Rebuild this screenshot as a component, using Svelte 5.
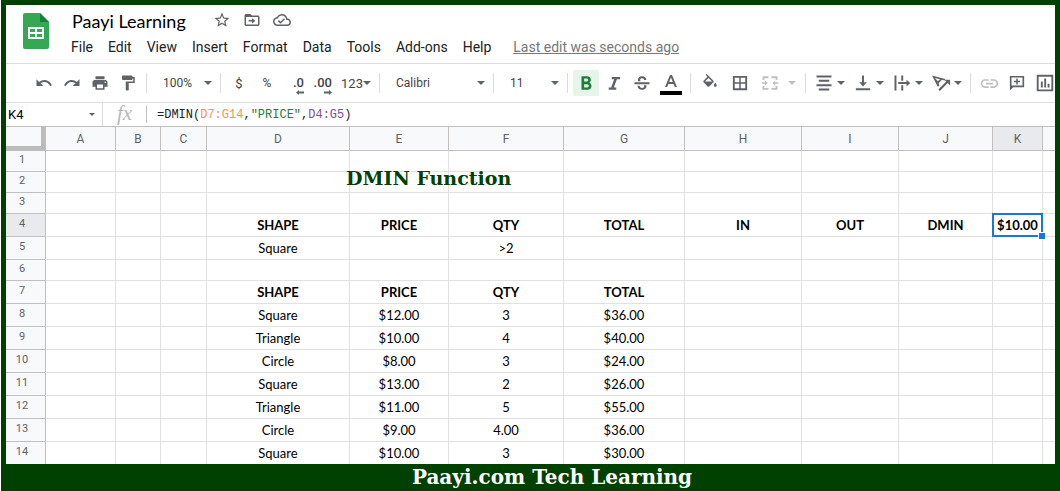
<script lang="ts">
  interface Column {
    name: string;
    width: number;
  }

  interface Row {
    height: number;
    bold?: boolean;
    cells: Record<string, string>;
  }

  const menus = ["File", "Edit", "View", "Insert", "Format", "Data", "Tools", "Add-ons", "Help"];

  const columns: Column[] = [
    { name: "A", width: 70 },
    { name: "B", width: 45 },
    { name: "C", width: 46 },
    { name: "D", width: 143 },
    { name: "E", width: 99 },
    { name: "F", width: 115 },
    { name: "G", width: 121 },
    { name: "H", width: 117 },
    { name: "I", width: 97 },
    { name: "J", width: 94 },
    { name: "K", width: 50 },
  ];

  const rows: Row[] = [
    { height: 21, cells: {} },
    { height: 21, cells: {} },
    { height: 21, cells: {} },
    {
      height: 23,
      bold: true,
      cells: { D: "SHAPE", E: "PRICE", F: "QTY", G: "TOTAL", H: "IN", I: "OUT", J: "DMIN", K: "$10.00" },
    },
    { height: 23, cells: { D: "Square", F: ">2" } },
    { height: 21, cells: {} },
    { height: 23, bold: true, cells: { D: "SHAPE", E: "PRICE", F: "QTY", G: "TOTAL" } },
    { height: 23, cells: { D: "Square", E: "$12.00", F: "3", G: "$36.00" } },
    { height: 23, cells: { D: "Triangle", E: "$10.00", F: "4", G: "$40.00" } },
    { height: 23, cells: { D: "Circle", E: "$8.00", F: "3", G: "$24.00" } },
    { height: 23, cells: { D: "Square", E: "$13.00", F: "2", G: "$26.00" } },
    { height: 23, cells: { D: "Triangle", E: "$11.00", F: "5", G: "$55.00" } },
    { height: 23, cells: { D: "Circle", E: "$9.00", F: "4.00", G: "$36.00" } },
    { height: 22, cells: { D: "Square", E: "$10.00", F: "3", G: "$30.00" } },
  ];

  let activeCol = $state("K");
  let activeRow = $state(4);
  let bold = $state(true);

  function select(col: string, row: number) {
    activeCol = col;
    activeRow = row;
  }
</script>

{#snippet caret()}
  <svg class="caret" viewBox="0 0 8 4" aria-hidden="true"><path d="M0 0h8L4 4z" /></svg>
{/snippet}

{#snippet icon(d: string)}
  <svg class="icon" viewBox="0 0 24 24" aria-hidden="true"><path {d} /></svg>
{/snippet}

<div class="frame">
  <header class="header">
    <svg class="logo" viewBox="0 0 26 36" aria-hidden="true">
      <path fill="#34a853" d="M2 0h15l9 9v25a2 2 0 0 1-2 2H2a2 2 0 0 1-2-2V2a2 2 0 0 1 2-2z" />
      <path fill="#188038" d="M17 0l9 9h-9z" />
      <path fill="#fff" d="M5 14h16v12H5zM7 16v3h5v-3zM14 16v3h5v-3zM7 21v3h5v-3zM14 21v3h5v-3z" fill-rule="evenodd" />
    </svg>
    <div class="header-main">
      <div class="title-row">
        <h1 class="title">Paayi Learning</h1>
        <div class="title-actions">
          <button aria-label="Star">
            {@render icon("M22 9.24l-7.19-.62L12 2 9.19 8.63 2 9.24l5.46 4.73L5.82 21 12 17.27 18.18 21l-1.63-7.03L22 9.24zM12 15.4l-3.76 2.27 1-4.28-3.32-2.88 4.38-.38L12 6.1l1.71 4.04 4.38.38-3.32 2.88 1 4.28L12 15.4z")}
          </button>
          <button aria-label="Move">
            {@render icon("M20 6h-8l-2-2H4c-1.1 0-2 .9-2 2v12c0 1.1.9 2 2 2h16c1.1 0 2-.9 2-2V8c0-1.1-.9-2-2-2zm0 12H4V8h16v10zM12 12H7.500v2H12v2.500l4.500-3.500L12 9.500z")}
          </button>
          <button aria-label="Saved to Drive">
            {@render icon("M19.350 10.040C18.670 6.590 15.640 4 12 4 9.110 4 6.600 5.640 5.350 8.040 2.340 8.360 0 10.910 0 14c0 3.310 2.690 6 6 6h13c2.760 0 5-2.240 5-5 0-2.640-2.050-4.780-4.650-4.960zM19 18H6c-2.210 0-4-1.790-4-4 0-2.050 1.530-3.760 3.560-3.970l1.070-.110.500-.950C8.080 7.140 9.940 6 12 6c2.620 0 4.880 1.860 5.390 4.430l.300 1.500 1.530.110c1.560.100 2.780 1.410 2.780 2.960 0 1.650-1.350 3-3 3zm-9-3.820l-2.090-2.090L6.500 13.500 10 17l6.010-6.010-1.410-1.410z")}
          </button>
        </div>
      </div>
      <nav class="menus">
        {#each menus as menu (menu)}
          <button>{menu}</button>
        {/each}
        <a href="#history" class="last-edit">Last edit was seconds ago</a>
      </nav>
    </div>
  </header>

  <div class="toolbar" role="toolbar" aria-label="Formatting">
    <button class="tool" aria-label="Undo">
      {@render icon("M12.5 8c-2.65 0-5.05.99-6.9 2.6L2 7v9h9l-3.62-3.62c1.39-1.16 3.16-1.88 5.12-1.88 3.54 0 6.55 2.31 7.6 5.5l2.37-.78C21.08 11.03 17.15 8 12.5 8z")}
    </button>
    <button class="tool" aria-label="Redo">
      {@render icon("M18.4 10.6C16.55 8.99 14.15 8 11.5 8c-4.65 0-8.58 3.03-9.96 7.22L3.9 16c1.05-3.19 4.05-5.5 7.6-5.5 1.95 0 3.73.72 5.12 1.88L13 16h9V7l-3.6 3.6z")}
    </button>
    <button class="tool" aria-label="Print">
      {@render icon("M19 8H5c-1.660 0-3 1.340-3 3v6h4v4h12v-4h4v-6c0-1.660-1.340-3-3-3zm-3 11H8v-5h8v5zm3-7c-.550 0-1-.450-1-1s.450-1 1-1 1 .450 1 1-.450 1-1 1zm-1-9H6v4h12V3z")}
    </button>
    <button class="tool" aria-label="Paint format">
      {@render icon("M18 4V3c0-.55-.45-1-1-1H5c-.55 0-1 .45-1 1v4c0 .55.45 1 1 1h12c.55 0 1-.45 1-1V6h1v4H9v11c0 .55.45 1 1 1h2c.55 0 1-.45 1-1v-9h8V4h-3z")}
    </button>
    <span class="sep"></span>
    <label class="dropdown">
      <select aria-label="Zoom"><option>100%</option><option>75%</option></select>
      {@render caret()}
    </label>
    <span class="sep"></span>
    <button class="tool" aria-label="Format as currency">$</button>
    <button class="tool percent" aria-label="Format as percent">%</button>
    <button class="tool decimals" aria-label="Decrease decimal places">
      <span>.0</span>
      <svg viewBox="0 0 8 5" aria-hidden="true"><path d="M0 2.500L3 0v1.500h5v2H3V5z" /></svg>
    </button>
    <button class="tool decimals" aria-label="Increase decimal places">
      <span>.00</span>
      <svg viewBox="0 0 8 5" aria-hidden="true"><path d="M8 2.500L5 0v1.500H0v2h5V5z" /></svg>
    </button>
    <button class="tool formats" aria-label="More formats">123{@render caret()}</button>
    <span class="sep"></span>
    <label class="dropdown font">
      <select aria-label="Font"><option>Calibri</option><option>Arial</option></select>
      {@render caret()}
    </label>
    <span class="sep"></span>
    <label class="dropdown">
      <select aria-label="Font size"><option>11</option><option>12</option></select>
      {@render caret()}
    </label>
    <span class="sep"></span>
    <button class="tool" class:active={bold} aria-label="Bold" aria-pressed={bold} onclick={() => (bold = !bold)}>
      {@render icon("M16.500 11.500c1.200-.8 2-2 2-3.500 0-2.900-2.200-5-5-5H6v18h8.200c2.900 0 5.100-2.300 5.100-5.100 0-2-1.100-3.700-2.800-4.400zM9.500 6H13c1.100 0 2 .9 2 2s-.9 2-2 2H9.500zm4.100 12H9.500v-4.500h4.100c1.200 0 2.200 1 2.200 2.200S14.800 18 13.600 18z")}
    </button>
    <button class="tool" aria-label="Italic">
      {@render icon("M9 4v3h3.200l-4 11H5v3h10v-3h-3.200l4-11H20V4z")}
    </button>
    <button class="tool" aria-label="Strikethrough">
      {@render icon("M2 11h20v2.500H2zM6.700 9.500C6.100 5.500 8.600 3 12.200 3c3.300 0 5.500 2 5.600 5h-3c-.1-1.500-1-2.500-2.700-2.500-2.500 0-3.300 1.800-2 4zM14.500 15h3.300c.7 3.800-2 6-5.600 6-3.700 0-6.200-2-6.200-5.500h3c.1 2 1.400 3 3.300 3 2 0 3.100-1.400 2.200-3.500z")}
    </button>
    <button class="tool wide" aria-label="Text color">
      <svg class="letter" viewBox="0 0 22 22" aria-hidden="true">
        <path fill-rule="evenodd" d="M10 2h2l5 12h-2.200l-1.200-3H8.400l-1.200 3H5zM11 4.600L9.200 9h3.600z" />
        <path fill="#000" d="M0 18h22v4H0z" />
      </svg>
    </button>
    <span class="sep"></span>
    <button class="tool wide" aria-label="Fill color">
      {@render icon("M16.560 8.940L7.620 0 6.210 1.410l2.380 2.380-5.150 5.150c-.59.59-.59 1.540 0 2.120l5.500 5.500c.29.29.68.44 1.060.44s.77-.15 1.060-.44l5.500-5.500c.59-.58.59-1.530 0-2.120zM5.210 10L10 5.210 14.790 10H5.210zM19 11.500s-2 2.170-2 3.500c0 1.100.9 2 2 2s2-.9 2-2c0-1.330-2-3.500-2-3.500z")}
    </button>
    <button class="tool wide" aria-label="Borders">
      {@render icon("M2.500 2.500v19h19v-19zM11 19H5v-6h6zm0-8H5V5h6zm8 8h-6v-6h6zm0-8h-6V5h6z")}
    </button>
    <button class="tool merge" aria-label="Merge cells" disabled>
      {@render icon("M2 3h8v2.500H4.500V8H2zM14 3h8v5h-2.500V5.500H14zM2 16h2.500v2.500H10V21H2zM19.500 16H22v5h-8v-2.500h5.500zM1 11h4V8.500l4 3.500-4 3.500V13H1zM23 11h-4V8.500L15 12l4 3.500V13h4z")}
      {@render caret()}
    </button>
    <span class="sep"></span>
    <button class="tool combo" aria-label="Horizontal align">
      {@render icon("M2 2h20v2.600H2zM5 7.800h14v2.600H5zM2 13.600h20v2.600H2zM5 19.400h14V22H5z")}
      {@render caret()}
    </button>
    <button class="tool combo" aria-label="Vertical align">
      {@render icon("M10.700 2h2.600v9H17l-5 5.500L7 11h3.700zM2.500 19h19v2.600h-19z")}
      {@render caret()}
    </button>
    <button class="tool combo" aria-label="Text wrapping">
      {@render icon("M2 2h2.600v20H2zM11 2h2.600v7H11zM11 15h2.600v7H11zM7 10.800h11V7.500l5 4.500-5 4.500v-3.300H7z")}
      {@render caret()}
    </button>
    <button class="tool combo" aria-label="Text rotation">
      <svg class="icon" viewBox="0 0 24 24" aria-hidden="true">
        <path fill-rule="evenodd" d="M0 2l17.500 4.500-.6 2.300-3.700-1-4.400 4.400 1 3.700-2.300.6zM3.700 5.300l4.200 4.500 2.900-2.900z" />
        <path d="M8.500 20.500L19 10l-2.500-2.500H24V15l-3-3-10.500 10.500z" />
      </svg>
      {@render caret()}
    </button>
    <span class="sep"></span>
    <button class="tool link" aria-label="Insert link" disabled>
      {@render icon("M3.900 12c0-1.710 1.390-3.100 3.100-3.100h4V7H7c-2.760 0-5 2.240-5 5s2.240 5 5 5h4v-1.900H7c-1.710 0-3.100-1.390-3.100-3.100zM8 13h8v-2H8v2zm9-6h-4v1.900h4c1.710 0 3.100 1.390 3.100 3.100s-1.390 3.100-3.100 3.100h-4V17h4c2.760 0 5-2.240 5-5s-2.240-5-5-5z")}
    </button>
    <button class="tool" aria-label="Insert comment">
      {@render icon("M2.500 2.500h19v15H7L2.500 22zm2.200 2.200v10.600h14.600V4.700zM11 6h2v3h3v2h-3v3h-2v-3H8V9h3z")}
    </button>
    <button class="tool" aria-label="Insert chart">
      {@render icon("M1 1h22v22H1zm2.500 2.500v17h17v-17zM6.500 10H9v8H6.500zM11 6h2.500v12H11zM15.500 13H18v5h-2.500z")}
    </button>
  </div>

  <div class="formula-bar">
    <label class="name-box">
      <input aria-label="Name box" value={activeCol + activeRow} />
      {@render caret()}
    </label>
    <span class="fx" aria-hidden="true">fx</span>
    <div class="formula" role="textbox" tabindex="0" aria-label="Formula" contenteditable="true">=DMIN(<span class="range-a">D7:G14</span>,<span class="string">"PRICE"</span>,<span class="range-b">D4:G5</span>)</div>
  </div>

  <main class="sheet">
    <table>
      <colgroup>
        <col style="width: 40px" />
        {#each columns as col (col.name)}
          <col style="width: {col.width}px" />
        {/each}
        <col />
      </colgroup>
      <thead>
        <tr>
          <td class="corner"></td>
          {#each columns as col (col.name)}
            <th scope="col" class:current={col.name === activeCol}>{col.name}</th>
          {/each}
          <th class="rest"></th>
        </tr>
      </thead>
      <tbody>
        {#each rows as row, i (i)}
          <tr style="height: {row.height}px" class:bold={row.bold}>
            <th scope="row" class:current={i + 1 === activeRow}>{i + 1}</th>
            {#each columns as col (col.name)}
              <td
                class:selected={col.name === activeCol && i + 1 === activeRow}
                onclick={() => select(col.name, i + 1)}
              >{row.cells[col.name] ?? ""}</td>
            {/each}
            <td class="rest"></td>
          </tr>
        {/each}
      </tbody>
    </table>
    <h2 class="sheet-title">DMIN Function</h2>
  </main>

  <footer class="footer">Paayi.com Tech Learning</footer>
</div>

<style>
  :global(body) {
    margin: 0;
    background: #fff;
  }

  .frame {
    margin-left: 1px;
    border: 5px solid #004000;
    border-bottom: 0;
    overflow: hidden;
    font-family: Roboto, sans-serif;
    color: #202124;
  }

  button,
  select,
  input {
    margin: 0;
    padding: 0;
    border: 0;
    background: none;
    font: inherit;
    color: inherit;
  }

  .icon {
    width: 18px;
    height: 18px;
    display: block;
    fill: #5f6368;
    flex: none;
  }

  .caret {
    width: 8px;
    height: 4px;
    flex: none;
    fill: #5f6368;
  }

  .header {
    display: flex;
    gap: 22px;
    height: 58px;
    padding-left: 17px;
    border-bottom: 1px solid #dadce0;
  }

  .logo {
    width: 26px;
    height: 36px;
    margin-top: 8px;
    flex: none;
  }

  .header-main {
    display: flex;
    flex-direction: column;
    gap: 4px;
    padding-top: 4px;
  }

  .title-row {
    display: flex;
    align-items: center;
    gap: 27px;
    height: 24px;
    padding-left: 1px;
  }

  .title {
    margin: 0;
    font-family: Lato, sans-serif;
    font-size: 18px;
    font-weight: 400;
    line-height: 24px;
    color: #000;
  }

  .title-actions {
    display: flex;
    gap: 12px;
    padding-bottom: 2px;
  }

  .menus {
    display: flex;
    gap: 15px;
    font-size: 14px;
    line-height: 20px;
    white-space: nowrap;
  }

  .last-edit {
    margin-left: 7px;
    color: #777;
    text-decoration: underline;
  }

  .toolbar {
    display: flex;
    align-items: center;
    gap: 2px;
    height: 38px;
    padding-left: 25px;
    border-bottom: 1px solid #dadce0;
    font-size: 12px;
    color: #444;
  }

  .sep {
    width: 1px;
    height: 20px;
    margin: 0 3px;
    background: #dadce0;
    flex: none;
  }

  .tool {
    display: flex;
    align-items: center;
    justify-content: center;
    width: 26px;
    height: 26px;
    border-radius: 2px;
    flex: none;
    font-size: 13px;
  }

  .wide {
    width: 28px;
  }

  .active {
    background: #e6f4ea;
  }

  .active .icon {
    fill: #188038;
  }

  .percent {
    font-size: 12px;
  }

  .decimals {
    flex-direction: column;
    align-items: flex-end;
    padding: 4px 4px 0 0;
    font-weight: 500;
    line-height: 14px;
  }

  .decimals svg {
    width: 8px;
    height: 5px;
    fill: #5f6368;
  }

  .formats {
    width: 36px;
  }

  .letter {
    width: 22px;
    height: 22px;
    margin-top: 2px;
    fill: #5f6368;
  }

  .merge {
    width: 44px;
    gap: 9px;
  }

  .combo {
    width: 37px;
    gap: 4px;
  }

  .tool:disabled svg {
    fill: #c0c0c0;
  }

  .link svg {
    width: 21px;
    height: 21px;
  }

  .dropdown {
    display: grid;
    align-items: center;
    width: 63px;
    flex: none;
  }

  .font {
    width: 103px;
  }

  .dropdown select,
  .dropdown .caret {
    grid-area: 1 / 1;
  }

  .dropdown select {
    appearance: none;
    height: 26px;
    padding-left: 11px;
  }

  .dropdown .caret {
    justify-self: end;
    margin-right: 3px;
    pointer-events: none;
  }

  .formula-bar {
    display: flex;
    align-items: center;
    height: 23px;
  }

  .name-box {
    display: flex;
    align-items: center;
    width: 96px;
    height: 23px;
    border-right: 1px solid #dadce0;
    font-size: 13px;
    flex: none;
  }

  .name-box input {
    flex: 1;
    min-width: 0;
    padding-left: 2px;
    color: #000;
  }

  .name-box .caret {
    width: 6px;
    height: 3px;
    margin-right: 7px;
  }

  .fx {
    width: 44px;
    height: 17px;
    border-right: 1px solid #c0c0c0;
    box-sizing: border-box;
    font: italic 21px/14px "Liberation Serif", serif;
    color: #b8b8b8;
    text-align: center;
    flex: none;
  }

  .formula {
    flex: 1;
    padding-left: 10px;
    font: 12px/20px "Liberation Mono", monospace;
    color: #222;
    white-space: nowrap;
    outline: none;
  }

  .range-a {
    color: #f79256;
  }

  .string {
    color: #188038;
  }

  .range-b {
    color: #7e5090;
  }

  .sheet {
    position: relative;
  }

  table {
    width: 100%;
    table-layout: fixed;
    border-collapse: separate;
    border-spacing: 0;
  }

  th,
  td {
    box-sizing: border-box;
    padding: 0;
    border-right: 1px solid #e1e1e1;
    border-bottom: 1px solid #e1e1e1;
    text-align: center;
    white-space: nowrap;
  }

  th {
    border-color: #c0c0c0;
    background: #f8f9fa;
    font-size: 12px;
    font-weight: 400;
    line-height: 14px;
    color: #5f6368;
  }

  th.current {
    background: #e8eaed;
  }

  thead th,
  .corner {
    height: 25px;
    border-top: 1px solid #c0c0c0;
  }

  .corner {
    border-right: 5px solid #bcbcbc;
    border-bottom: 5px solid #bcbcbc;
    background: #f8f9fa;
  }

  tbody th {
    padding: 0 7px 2px 0;
    font-size: 11px;
  }

  tbody td {
    font-family: Lato, Carlito, sans-serif;
    font-size: 13px;
    line-height: 16px;
    color: #000;
  }

  .bold td {
    font-weight: 700;
  }

  .rest {
    border-right: 0;
  }

  tbody tr:last-child th,
  tbody tr:last-child td {
    border-bottom: 0;
  }

  /* selection frame with its fill handle */
  .selected {
    position: relative;
  }

  .selected::before {
    content: "";
    position: absolute;
    inset: -1px;
    border: 2px solid #1a73e8;
  }

  .selected::after {
    content: "";
    position: absolute;
    right: -4px;
    bottom: -4px;
    width: 6px;
    height: 6px;
    border: 1px solid #fff;
    background: #1a73e8;
  }

  .sheet-title {
    position: absolute;
    top: 40px;
    left: 340px;
    margin: 0;
    font: 700 19px/24px "DejaVu Serif", serif;
    color: #004000;
    white-space: nowrap;
    pointer-events: none;
  }

  .footer {
    margin: 0 -5px;
    padding-left: 43px;
    background: #004000;
    font: 700 20px/27px "DejaVu Serif", serif;
    color: #fff;
    text-align: center;
  }
</style>
